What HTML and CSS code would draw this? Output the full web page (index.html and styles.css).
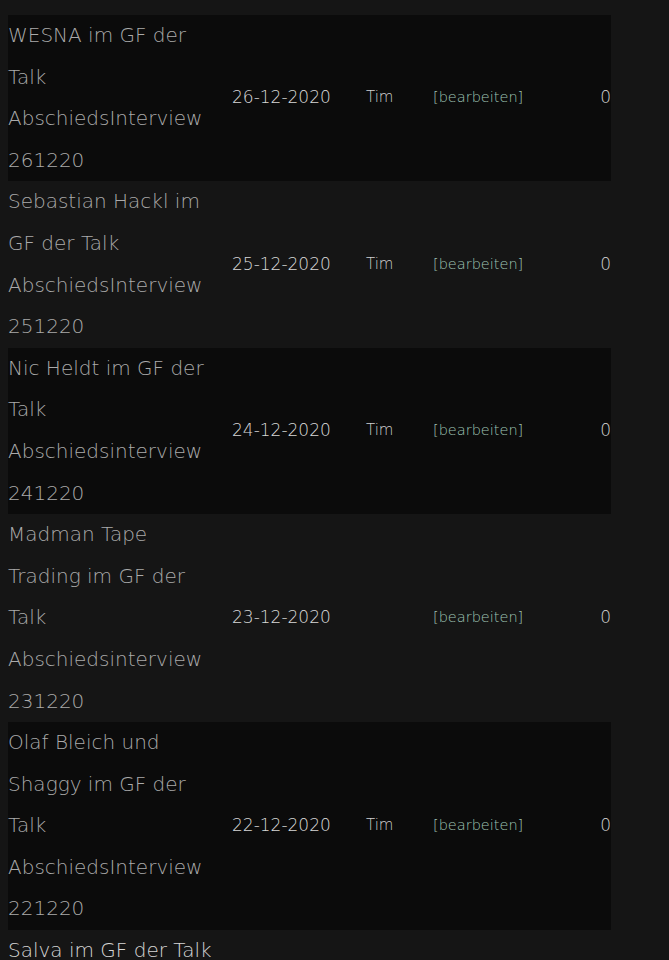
FILE: index.html
```html
<!DOCTYPE html>
<html lang="de">
<head>
  <meta charset="UTF-8">
  <title>Interviews</title>
  <link rel="stylesheet" href="styles.css">
</head>
<body>

  <table class="list">
    <tr class="odd">
      <td class="title">WESNA im GF der Talk AbschiedsInterview 261220</td>
      <td class="date">26-12-2020</td>
      <td class="user">Tim</td>
      <td class="edit"><a href="#">[bearbeiten]</a></td>
      <td class="count">0</td>
    </tr>
    <tr>
      <td class="title">Sebastian Hackl im GF der Talk AbschiedsInterview 251220</td>
      <td class="date">25-12-2020</td>
      <td class="user">Tim</td>
      <td class="edit"><a href="#">[bearbeiten]</a></td>
      <td class="count">0</td>
    </tr>
    <tr class="odd">
      <td class="title">Nic Heldt im GF der Talk Abschiedsinterview 241220</td>
      <td class="date">24-12-2020</td>
      <td class="user">Tim</td>
      <td class="edit"><a href="#">[bearbeiten]</a></td>
      <td class="count">0</td>
    </tr>
    <tr>
      <td class="title">Madman Tape Trading im GF der Talk Abschiedsinterview 231220</td>
      <td class="date">23-12-2020</td>
      <td class="user"></td>
      <td class="edit"><a href="#">[bearbeiten]</a></td>
      <td class="count">0</td>
    </tr>
    <tr class="odd">
      <td class="title">Olaf Bleich und Shaggy im GF der Talk AbschiedsInterview 221220</td>
      <td class="date">22-12-2020</td>
      <td class="user">Tim</td>
      <td class="edit"><a href="#">[bearbeiten]</a></td>
      <td class="count">0</td>
    </tr>
    <tr>
      <td class="title last">Salva im GF der Talk</td>
      <td class="date"></td>
      <td class="user"></td>
      <td class="edit"></td>
      <td class="count"></td>
    </tr>
  </table>

</body>
</html>
```

FILE: styles.css
```css
* {
  box-sizing: border-box;
}

body {
  margin: 0;
  padding: 15px 8px 0;
  background: #151515;
  color: #c8c8c8;
  font-family: 'DejaVu Sans', sans-serif;
  font-weight: 200;
}

.list {
  width: 603px;
  border-collapse: collapse;
  table-layout: fixed;
  font-size: 20px;
  line-height: 41.6px;
}

.list td {
  padding: 0;
  vertical-align: middle;
}

.list tr.odd {
  background: #0b0b0b;
}

.list td.title {
  width: 224px;
  padding-right: 14px;
  color: #aaaaaa;
}

.list td.last {
  color: #d6d6d6;
}

.date {
  width: 134px;
  font-size: 17px;
  color: #d8d8d8;
}

.user {
  width: 67px;
  font-size: 15px;
  color: #d0d0d0;
}

.edit {
  font-size: 14.5px;
}

.edit a {
  color: #9fc3b3;
  text-decoration: none;
}

.count {
  width: 40px;
  text-align: right;
  font-size: 17px;
  color: #d0d0d0;
}
```
